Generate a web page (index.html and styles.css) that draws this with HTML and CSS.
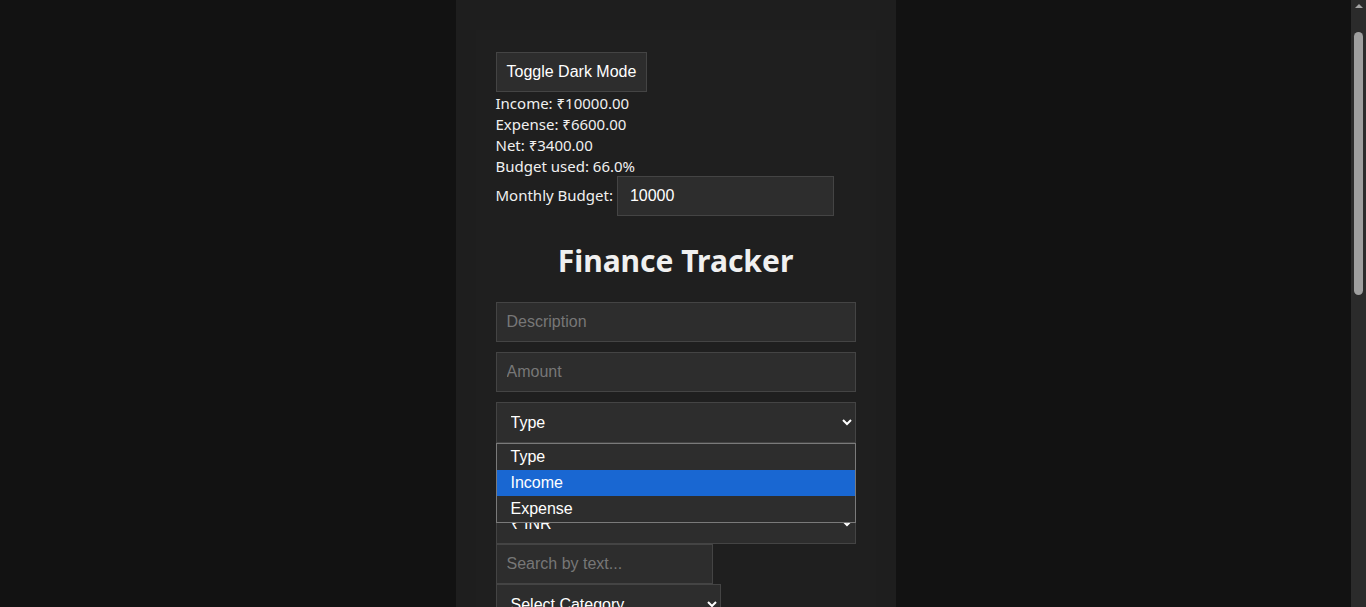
FILE: index.html
```html
<!DOCTYPE html>
<html lang="en">
<head>
<meta charset="utf-8">
<title>Finance Tracker</title>
<link rel="stylesheet" href="styles.css">
</head>
<body>
<div class="viewport">
<div class="app">
  <div class="card">
    <button class="toggle">Toggle Dark Mode</button>
    <div class="stats">
      <div>Income: ₹10000.00</div>
      <div>Expense: ₹6600.00</div>
      <div>Net: ₹3400.00</div>
      <div>Budget used: 66.0%</div>
    </div>
    <div class="budget-row">
      <label class="budget-label">Monthly Budget:</label>
      <input class="field budget-input" type="number" value="10000">
    </div>
    <h1 class="title">Finance Tracker</h1>
    <div class="form">
      <input class="field wide" type="text" placeholder="Description">
      <input class="field wide" type="number" placeholder="Amount">
      <div class="select-wrap">
        <select class="field wide select">
          <option>Type</option>
          <option>Income</option>
          <option>Expense</option>
        </select>
        <div class="popup">
          <div class="opt">Type</div>
          <div class="opt active">Income</div>
          <div class="opt">Expense</div>
        </div>
      </div>
      <select class="field wide select short">
        <option>Select Category</option>
      </select>
      <select class="field wide select">
        <option>₹ INR</option>
      </select>
    </div>
    <div class="filters">
      <input class="field search" type="text" placeholder="Search by text...">
      <select class="field select cat">
        <option>Select Category</option>
      </select>
    </div>
    <div class="spacer"></div>
  </div>
</div>
</div>
<div class="scrollbar">
  <div class="sb-arrow"></div>
  <div class="sb-thumb"></div>
</div>
</body>
</html>
```

FILE: styles.css
```css
html {
  color-scheme: dark;
}
body {
  margin: 0;
  background: #121212;
  font-family: "Noto Sans", "Open Sans", sans-serif;
  color: #f0f0f0;
  overflow: hidden;
  display: flex;
  height: 100vh;
}
.viewport {
  flex: 1;
  height: 100vh;
  overflow: hidden;
}
.scrollbar {
  width: 15px;
  flex: none;
  height: 100vh;
  background: #2b2b2b;
  display: flex;
  flex-direction: column;
  align-items: center;
}
.sb-arrow {
  width: 0;
  height: 0;
  margin-top: 4px;
  border-left: 4px solid transparent;
  border-right: 4px solid transparent;
  border-bottom: 4px solid #a3a3a3;
}
.sb-thumb {
  width: 9px;
  height: 263px;
  margin-top: 24px;
  background: #9f9f9f;
  border-radius: 5px;
}
.app {
  width: 440px;
  margin: 0 auto;
  background: #1e1e1e;
  padding: 30px 20px;
  box-sizing: border-box;
}
.card {
  background: #1f1f1f;
  padding: 22px 20px 20px;
}
.toggle {
  display: block;
  height: 40px;
  padding: 0 10px;
  font-family: "Liberation Sans", Arial, sans-serif;
  font-size: 16px;
  color: #ffffff;
  background: #2d2d2d;
  border: 1px solid #444;
  border-radius: 0;
}
.stats {
  font-size: 15px;
  line-height: 21px;
  padding-top: 1px;
}
.budget-row {
  display: flex;
  align-items: center;
  gap: 4px;
  font-size: 15px;
  margin-top: -1px;
}
.budget-label {
  margin-top: -2px;
}
.field {
  height: 40px;
  box-sizing: border-box;
  background: #2d2d2d;
  border: 1px solid #444;
  border-radius: 0;
  color: #ffffff;
  font-family: "Liberation Sans", Arial, sans-serif;
  font-size: 16px;
  padding: 0 10px;
  outline: none;
}
.field::placeholder {
  color: #777;
}
.field::-webkit-outer-spin-button,
.field::-webkit-inner-spin-button {
  -webkit-appearance: none;
  margin: 0;
}
.budget-input {
  width: 217px;
  padding-left: 12px;
}
.title {
  text-align: center;
  font-size: 30px;
  font-weight: 700;
  margin: 22px 0 19px;
  line-height: 45px;
}
.form {
  display: flex;
  flex-direction: column;
  gap: 10px;
}
.wide {
  width: 360px;
}
.select {
  height: 41px;
  padding-left: 10px;
}
.select.short {
  height: 40px;
}
.select-wrap {
  position: relative;
}
.popup {
  position: absolute;
  left: 0;
  top: 41px;
  width: 360px;
  box-sizing: border-box;
  background: #2d2d2d;
  border: 1px solid #7a7a7a;
  font-family: "Liberation Sans", Arial, sans-serif;
  font-size: 16px;
  color: #ffffff;
  z-index: 2;
}
.opt {
  height: 26px;
  line-height: 26px;
  padding-left: 14px;
}
.opt.active {
  background: #1967d2;
}
.filters {
  display: flex;
  flex-direction: column;
  align-items: flex-start;
}
.search {
  width: 217px;
  height: 40px;
}
.cat {
  width: 225px;
}
.spacer {
  height: 700px;
}
```
